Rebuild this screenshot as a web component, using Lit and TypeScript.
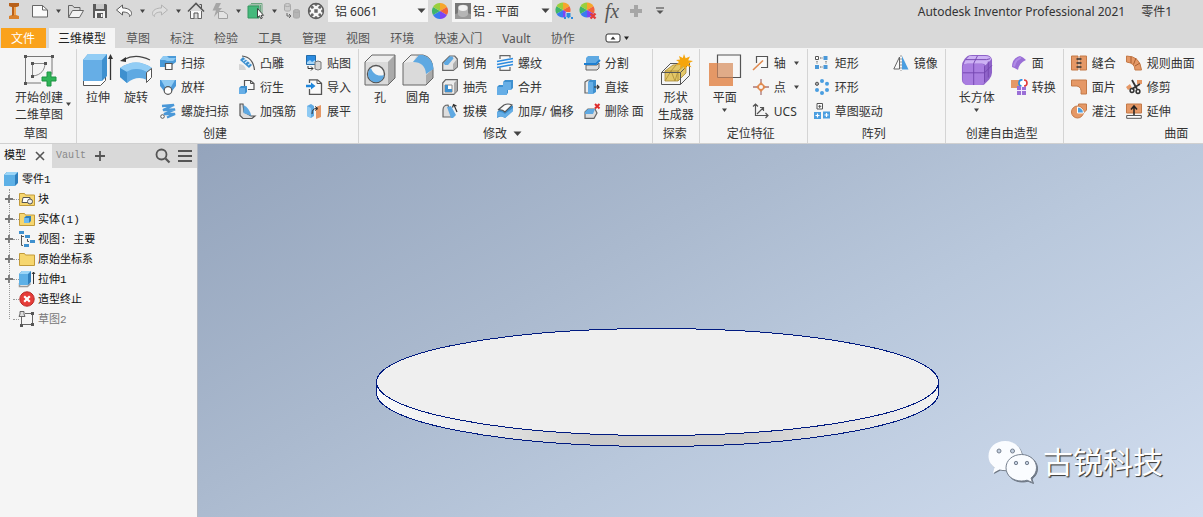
import { LitElement, html, svg, css, nothing } from "lit";
import type { TemplateResult } from "lit";
import { customElement, state } from "lit/decorators.js";
import { classMap } from "lit/directives/class-map.js";

const G = "#666";
const OR = "#e59866";

/* Colour wheel made of six equal sectors, clockwise from the top. */
function wheel(cx: number, cy: number, r: number) {
  const colors = ["#f7a62b", "#f2643a", "#7b45f5", "#3a7bf0", "#3fb56a", "#9bcf3c"];
  return colors.map((c, i) => {
    const a = ((i * 60 - 90) * Math.PI) / 180;
    const b = (((i + 1) * 60 - 90) * Math.PI) / 180;
    const p = (t: number) => `${(cx + r * Math.cos(t)).toFixed(2)} ${(cy + r * Math.sin(t)).toFixed(2)}`;
    return svg`<path d="M${cx} ${cy}L${p(a)}A${r} ${r} 0 0 1 ${p(b)}z" fill=${c}></path>`;
  });
}

/* Every glyph is drawn in a box of the size given first. */
const ICONS: Record<string, [number, number, TemplateResult]> = {
  logo: [18, 18, svg`<path d="M4 1h10v3l-3 1v8l3 1v3H4v-3l3-1V5L4 4z" fill="#d9802b"></path><path d="M4 1h10v3l-3 1H7L4 4zM7 5h2v8l-2 1z" fill="#b8601a"></path><path d="M9 5h2v8H9z" fill="#f0a04b"></path>`],
  fresh: [18, 18, svg`<path d="M1.500 3.500h10l5 4.500v7h-15z" fill="#fafafa" stroke=${G}></path><path d="M11.500 3.500V8h5" fill="none" stroke=${G}></path>`],
  open: [18, 18, svg`<path d="M1.500 15V3.500h4l1.500 2h6v3" fill="none" stroke=${G}></path><path d="M1.500 15.500l4-7h11l-4 7z" fill="#f2f2f2" stroke=${G}></path>`],
  save: [16, 16, svg`<path d="M1 1h13l1 1v13H1z" fill="#5a5a5a"></path><path d="M4 1h8v5H4z" fill="#c9c9c9"></path><path d="M3 8h10v7H3z" fill="#f2f2f2"></path><path d="M5 10h6v5H5z" fill="#5a5a5a"></path><path d="M9 11h1.500v3H9z" fill="#fff"></path>`],
  undo: [18, 16, svg`<path d="M1.500 7l6-5v3c5 0 9 2 9 5.500 0 1.500-1 2.500-2 3 .5-3-2.500-4.500-7-4.500v3z" fill="#fafafa" stroke="#5a5a5a"></path>`],
  redo: [18, 16, svg`<path d="M16.500 7l-6-5v3c-5 0-9 2-9 5.500 0 1.500 1 2.500 2 3-.5-3 2.500-4.500 7-4.500v3z" fill="#dedede" stroke="#b3b3b3"></path>`],
  home: [18, 18, svg`<path d="M3.500 9v7.500h11V9" fill="#fafafa" stroke=${G}></path><path d="M1 9.500L9 1.500l8 8" fill="none" stroke="#555" stroke-width="1.600"></path><path d="M12.500 2.500h2V6" fill="none" stroke="#555"></path><path d="M7 16.500V11h4v5.500" fill="#ddd" stroke="#555"></path>`],
  flash: [18, 18, svg`<path d="M5 1h5L7.500 6H11L3 15l2-6.500H1.500z" fill="#a6a6a6"></path><path d="M7.500 9.500h5l4 3v4h-9z" fill="#e3e3e3" stroke="#a0a0a0"></path>`],
  pick: [18, 18, svg`<path d="M4 1.500h11v11M2.500 3h11v11" fill="none" stroke="#69a57e"></path><path d="M1 4h11v12H1z" fill="#45b97c" stroke="#34965f"></path><path d="M10.500 6.500v9l2-1.800 1.300 3 1.500-.7-1.300-2.700h2.500z" fill="#fff" stroke="#333" stroke-width=".9"></path>`],
  link: [18, 18, svg`<g fill="#ccc" stroke="#aaa"><path d="M1.500 3v5c0 1.500 6 1.500 6 0V3"></path><ellipse cx="4.500" cy="3" rx="3" ry="1.500"></ellipse></g><g fill="#b5b5b5" stroke="#aaa"><path d="M10.500 9v6c0 1.500 6 1.500 6 0V9"></path><ellipse cx="13.500" cy="9" rx="3" ry="1.500"></ellipse></g><path d="M4 11v3h4M6 12l2 2-2 2" fill="none" stroke=${G}></path>`],
  ball: [18, 18, svg`<circle cx="9" cy="9" r="7.500" fill="#f7f7f7" stroke="#555" stroke-width="1.300"></circle><g fill="#666"><path d="M7.300 7.300h3.400v3.400H7.300zM7 1.500h4l-1 2.300H8zM7 16.500h4l-1-2.300H8zM1.500 7v4l2.300-1V8zM16.500 7v4l-2.300-1V8z"></path><circle cx="5.200" cy="5.200" r="1.500"></circle><circle cx="12.800" cy="5.200" r="1.500"></circle><circle cx="5.200" cy="12.800" r="1.500"></circle><circle cx="12.800" cy="12.800" r="1.500"></circle></g>`],
  wheel: [16, 16, svg`${wheel(8, 8, 8)}`],
  wheelAdd: [18, 18, svg`${wheel(8, 8, 7.5)}<path d="M11 10.500h5v4l-2.500 2.500-2.500-2.500z" fill="#2b8be0" stroke="#d9d9d9"></path><path d="M9 15h2v2H9zM16 15h2v2h-2z" fill="#2b8be0"></path>`],
  wheelDel: [18, 18, svg`${wheel(8, 8, 7.5)}<path d="M11.500 11.500l5 5m0-5l-5 5" stroke="#e23b3b" stroke-width="2.400"></path>`],
  plus: [14, 14, svg`<path d="M5 1h4v4h4v4H9v4H5V9H1V5h4z" fill="#a6a6a6"></path>`],
  more: [10, 10, svg`<path d="M1 2h8" stroke="#555" stroke-width="1.200"></path><path d="M1.500 4.500h7L5 8z" fill="#555"></path>`],
  arrow: [7, 5, svg`<path d="M1 .5h5L3.500 4z" fill="#444"></path>`],
  arrowBig: [9, 6, svg`<path d="M.5.500h8L4.500 5z" fill="#444"></path>`],
  swatch: [16, 16, svg`<path d="M0 0h16v16H0z" fill="#777"></path><path d="M0 11l8-2 8 2v5H0z" fill="#999"></path><path d="M3 4c0-3 10-3 10 0v5c1 3-2 5-5 5s-6-2-5-5z" fill="#b5b5b5"></path><ellipse cx="8" cy="5" rx="4.500" ry="3" fill="#f2f2f2"></ellipse>`],
  pill: [26, 12, svg`<rect x="1" y="2" width="14" height="8" rx="2" fill="#fff" stroke="#333"></rect><path d="M5.500 7.500L8 4.500l2.500 3z" fill="#333"></path><path d="M19 4.500h5L21.500 8z" fill="#222"></path>`],

  sketch: [32, 32, svg`<g fill="none" stroke="#777"><path d="M2 2.500h27v18M2.500 2v27H18"></path><path d="M8.500 9.500h13M9.500 9v13M22 9c0 7-4 12-12 13" stroke="#888"></path></g><path d="M1 1h3v3H1zM28 1h3v3h-3zM1 28h3v3H1zM8 8h3v3H8zM21 8h3v3h-3zM8 21h3v3H8z" fill="#555"></path><path d="M24 18h4v5h5v4h-5v5h-4v-5h-5v-4h5z" fill="#2fb457" stroke="#1d9443"></path>`],
  extrude: [32, 32, svg`<path d="M1.500 26v5.500h17l5-5V21" fill="#fff" stroke="#555"></path><path d="M1 6l5-6h19v22l-5 5H1z" fill="#3e90cf"></path><path d="M1 6h19v21H1z" fill="#66aee6"></path><path d="M1 6l5-6h19l-5 6z" fill="#92cdf5"></path><path d="M28.500 26V3" stroke="#333" stroke-width="1.300"></path><path d="M26 5l2.500-5L31 5z" fill="#333"></path>`],
  revolve: [32, 32, svg`<path d="M4 5.500Q16-1 30 6" fill="none" stroke="#444" stroke-width="1.300"></path><path d="M0 7l6-4v5z" fill="#333"></path><path d="M0 14Q16 3 32 14l-4 7Q16 13 7 29L0 23z" fill="#66aee6"></path><path d="M0 14Q16 3 32 14l-5 4Q16 12 6 18z" fill="#92cdf5"></path><path d="M0 14l7 4v11l-7-6z" fill="#3e90cf"></path><path d="M7 18q9-6 20 0v8q-10-5-20 3z" fill="#5fa9e2"></path><path d="M26.500 18.500l5-4v9l-5 5z" fill="#fff" stroke="#555"></path>`],
  hole: [32, 32, svg`<path d="M1 8l7-7h23v23l-7 7H1z" fill="#c9c9c9"></path><path d="M1 8h23v23H1z" fill="#dadada"></path><path d="M1 8l7-7h23l-7 7z" fill="#ededed"></path><path d="M24 8l7-7v23l-7 7z" fill="#aaa"></path><path d="M1 8l7-7h23v23l-7 7H1z" fill="none" stroke="#666"></path><circle cx="12" cy="20" r="8.500" fill="#f4f4f4" stroke="#555" stroke-width="1.400"></circle><path d="M7 14a8 8 0 1 0 13 7c-6 2-11-1-13-7z" fill="#5fa9e2"></path>`],
  fillet: [32, 32, svg`<path d="M1 31V9l8-8h12Q31 3 31 16v8l-7 7z" fill="#dadada"></path><path d="M24 21l7-6v9l-7 7z" fill="#aaa"></path><path d="M1 9l8-8h6l-4 7Q5 8 1 9z" fill="#eee"></path><path d="M1 31V9l8-8h12Q31 3 31 16v8l-7 7z" fill="none" stroke="#666"></path><path d="M17 1h4q10 3 10.500 14L24 20Q23 8 11 8z" fill="#5fa9e2"></path>`],
  shapegen: [32, 32, svg`<g fill="#e3c768" stroke="#a98a35" stroke-width=".8"><path d="M5 17l8-6 13-1v9l-8 8H5z"></path><path d="M5 17h13l8-7M18 17v10M5 27l6-10 4 10 3-10M11 17l5-6"></path></g><g fill="none" stroke="#555"><path d="M1.500 18.500h19v12h-19zM1.500 18.500l9-9M20.500 18.500l9-9v12l-9 9M10 9.500h8"></path></g><path d="M24 0l1.600 4.200L30 2.500l-1.800 3.700 4.800.8-4.500 2.400 3 3.800-4.600-1.200L25 16l-1.500-4.200L20 14.500l.4-4L16 11l3-3-3-2 4-.4-1-3.600 3.800 2z" fill="#f5a50c"></path>`],
  plane: [32, 32, svg`<path d="M8.500 1h23v22.500h-23z" fill="#f7f7f7" stroke="#555" stroke-width="1.200"></path><path d="M0 9h24v23H0z" fill="#e59866"></path><path d="M9 9h15v14H9z" fill="#e0ab88"></path><path d="M8.500 9v14.500H24" stroke="#a8765a" fill="none"></path>`],
  box: [32, 32, svg`<g transform="scale(.94)"><path d="M1 13q0-4 3-8l3-3q2-1 5-1h14q6 0 7 5v14q0 3-3 7l-4 4q-1 2-4 2H7q-6-1-6-6z" fill="#8f63c9"></path><path d="M2 13q0-3 5-3h14q4 0 4 4v14q0 5-4 5H7q-5 0-5-5z" fill="#a97de0"></path><path d="M3 11q1-5 6-9h17q6 0 6 4l-6 6q-1-2-4-2H7z" fill="#cdb2f4"></path><path d="M2 20h23l8-8M13.500 10v23M13.500 10l4-8M25 13v17M5 6h22l4-1M29 8v17" fill="none" stroke="#7446b0"></path></g>`],

  sweep: [16, 16, svg`<path d="M0 5l4-4h12v6l-4 3H5v2H0z" fill="#4a9ad8"></path><path d="M0 5l3-4h4l2 2h7l-3 3H7L5 5z" fill="#8ecaf3"></path><path d="M5.500 8.500h6.500v6H5.500z" fill="#fff" stroke="#555" stroke-width="1.200"></path>`],
  loft: [16, 16, svg`<path d="M0 1h16v6l-4 5H4L0 7z" fill="#4a98d8"></path><path d="M1 1h14l-4 7H5z" fill="#8ecaf3"></path><circle cx="8" cy="11.500" r="3.800" fill="#fff" stroke="#555" stroke-width="1.200"></circle>`],
  coil: [16, 16, svg`<path d="M2 3L14 2 3 7l12-.5L4 11l11 0-8 3.500" fill="none" stroke="#4a98d8" stroke-width="2.400"></path><circle cx="2.500" cy="13.500" r="1.800" fill="#fff" stroke="#555"></circle>`],
  emboss: [16, 16, svg`<path d="M0 15V9q6 0 7 6z" fill="#d5d5d5"></path><path d="M3 1q11 1 12.500 14" fill="none" stroke="#555" stroke-width="1.200"></path><path d="M1 5l3-3 9 8-3 3z" fill="#3e90cf"></path><path d="M4 6l3-2M6 8l3-2.500M9 10l3-2" stroke="#cfe8fb" stroke-width="1.200"></path>`],
  derive: [16, 16, svg`<path d="M5.500 7V1.500h6l3.500 3v6H9" fill="#fafafa" stroke="#555" stroke-width="1.200"></path><path d="M11.500 1.500v3H15" fill="none" stroke="#555"></path><path d="M0 9l2-2h6v6l-2 2H0z" fill="#3e90cf"></path><path d="M0 9h6v6H0z" fill="#66aee6"></path>`],
  rib: [16, 16, svg`<path d="M1 1h3l1 8 7 4h4l-3 2.500H4l-3-3z" fill="#ddd" stroke="#555" stroke-width="1.200"></path><path d="M4.500 2v8l8 3q-2-8-8-11z" fill="#5fa9e2"></path>`],
  decal: [16, 16, svg`<path d="M.5.500h9v9h-9z" fill="#2b8be0" stroke="#236ba8"></path><path d="M1 7l3-2 2 2 3-2v4H1z" fill="#a8d5f5"></path><path d="M9 7q3-2 6 0v7q-3 2-6 0z" fill="#d5d5d5" stroke="#777"></path><path d="M2 11v2.500h5M5 11.500l2 2-2 2" fill="none" stroke="#333"></path>`],
  importIt: [16, 16, svg`<path d="M3.500 4V.8h8l4 3.500v11h-12V10" fill="#fafafa" stroke="#555" stroke-width="1.300"></path><path d="M11 1v3.500h4" fill="none" stroke="#555"></path><path d="M0 5.800h5V3.500L9.500 7 5 10.500V8.200H0z" fill="#1e86dc"></path>`],
  flat: [16, 16, svg`<path d="M1 3l4-2 3 2v10l-3 2-4-2z" fill="#5fa9e2"></path><path d="M1 3l4 2v10l-4-2z" fill="#8ecaf3"></path><path d="M10 4l5-2v12l-5 2z" fill="#e59866"></path><path d="M6 11q0-6 5-5.500M9 3.500l3 2-3 2" fill="none" stroke="#333"></path>`],
  chamfer: [16, 16, svg`<path d="M.7 8l7-7h5L15.300 4v8l-4 3.300H.7z" fill="#e3e3e3" stroke="#666" stroke-width="1.200"></path><path d="M11 9l4-5v8l-4 3.300z" fill="#b0b0b0"></path><path d="M1.500 8l6-6.500h3l1 2L6 10H3z" fill="#5fa9e2"></path>`],
  shell: [16, 16, svg`<path d="M.7 4l3-3.300h11.600v11l-3.500 3.600H.7z" fill="#ececec" stroke="#666" stroke-width="1.200"></path><path d="M12 4l3-3v11l-3 3z" fill="#aaa"></path><path d="M3 6h7v7H3z" fill="#fff" stroke="#888"></path><path d="M3 6h3v4h4v3H3z" fill="#3e90cf"></path>`],
  draft: [16, 16, svg`<path d="M1 14V7q0-5 5-5l4 12z" fill="#ddd" stroke="#666" stroke-width="1.200"></path><path d="M5 4l4-1 5 9-3 3H9z" fill="#5fa9e2"></path><path d="M15 9l-3-7M10.500 4.500l1-3 3 1.500" fill="none" stroke="#333" stroke-width="1.200"></path>`],
  thread: [16, 16, svg`<path d="M3 4V.7h10v2M3 12.500v2.800h10V12" fill="#fafafa" stroke="#666" stroke-width="1.200"></path><path d="M0 6.500l16-3M0 9.500l16-3M0 12.500l16-3" stroke="#2b8be0" stroke-width="1.400"></path>`],
  combine: [16, 16, svg`<path d="M6 3l2-2h8v8l-2 2h-3v3l-2 2H0V8l2-2h4z" fill="#3e90cf"></path><path d="M6 3h8v8h-4v5H0V8h6z" fill="#66aee6"></path>`],
  thicken: [16, 16, svg`<path d="M0 9l8-7q4-2 8 1v5l-8 7q-4-3-8 0z" fill="#3e90cf"></path><path d="M1 7l6-5q4-2 8 0L8 9Q5 6 1 7z" fill="#fafafa" stroke="#555" stroke-width="1.200"></path><path d="M0 9q4-1 8 2l8-6v3l-8 7q-4-3-8-1z" fill="#66aee6"></path>`],
  split: [16, 16, svg`<path d="M2 3l2-2h11v4l-2 3H2z" fill="#5fa9e2"></path><path d="M2 10h11l2-2v5l-2 2H2z" fill="#ddd" stroke="#666"></path><path d="M0 9h12l4-4" fill="none" stroke="#1e7fd0" stroke-width="1.800"></path>`],
  direct: [16, 16, svg`<path d="M1 3l3-2h3v13H1z" fill="#ececec" stroke="#666" stroke-width="1.200"></path><path d="M4 3l2-2h6v12l-3 2H4z" fill="#3e90cf"></path><path d="M4 3h5v12H4z" fill="#66aee6"></path><path d="M10 8h5M13 6l2 2-2 2" fill="none" stroke="#333" stroke-width="1.200"></path>`],
  delFace: [16, 16, svg`<path d="M1 9l3-3h7l2 4-3 5.300H1z" fill="#ddd" stroke="#666" stroke-width="1.200"></path><path d="M1 9l3-3h7l-2 5H1z" fill="#5fa9e2"></path><path d="M11 1l4.500 4.500m0-4.500L11 5.500" stroke="#e02b2b" stroke-width="2"></path>`],
  axis: [16, 16, svg`<path d="M3.500 8V1.500h11v11H8" fill="#fafafa" stroke="#555" stroke-width="1.200"></path><path d="M0 15L10 5.500" stroke="#e08a50" stroke-width="1.600"></path>`],
  point: [16, 16, svg`<path d="M8 0v16M0 8h16" stroke="#a77" stroke-width="1.300"></path><path d="M8 3l5 5-5 5-5-5z" fill="#e08a50"></path><circle cx="8" cy="8" r="2" fill="#f7f7f7"></circle>`],
  ucs: [16, 16, svg`<path d="M2.500 1v11.500H15M0 3.500L2.500 1 5 3.500M12.500 10l2.500 2.500-2.500 2.500M4 11l6-6M7 4.500h3.500V8" fill="none" stroke="#555" stroke-width="1.200"></path>`],
  rect: [16, 16, svg`<path d="M9.500 1h4v4h-4zM1 10h4v4H1zM9.500 10h4v4h-4z" fill="#4a98d8"></path><path d="M1.500 1.500h3v3h-3z" fill="#fff" stroke="#555"></path><path d="M6 3h3M3 6v3M12 6v3M6 12h3" stroke="#555" stroke-dasharray="1.500 1"></path>`],
  circ: [16, 16, svg`<g fill="#4a9ee0"><circle cx="8" cy="2" r="2"></circle><circle cx="13" cy="4.800" r="2"></circle><circle cx="13" cy="11" r="2"></circle><circle cx="8" cy="14" r="2"></circle><circle cx="3" cy="11" r="2"></circle></g><circle cx="3" cy="4.800" r="1.600" fill="#aaa" stroke="#555"></circle>`],
  skdrive: [16, 16, svg`<path d="M3 .5h5.500V6H3z" fill="#fff" stroke="#555"></path><path d="M5.700 2v3M4.300 3.300h3" stroke="#555"></path><path d="M0 9h7v7H0zM9 8.500h7v7H9z" fill="#4a9ee0"></path><path d="M3.500 10.500v4M1.500 12.500h4M12.500 10v4M10.500 12h4" stroke="#fff" stroke-width="1.200"></path>`],
  mirror: [16, 16, svg`<path d="M6.500 2v12H.8z" fill="#fafafa" stroke="#666"></path><path d="M9 1l6.500 13.500H9z" fill="#4a9ee0"></path><path d="M8 0v16" stroke="#999" stroke-dasharray="2 1"></path>`],
  face: [16, 16, svg`<path d="M1 12Q1 3 9 1q3 1 6 4-7 3-8 10-3-2-6-3z" fill="#9a6fd6"></path><path d="M3 11.500Q4 5 10 2.500" stroke="#b08be6" fill="none" stroke-width="2"></path>`],
  convert: [16, 16, svg`<path d="M0 1h9v8H0z" fill=${OR}></path><path d="M6 7h9v9H6z" fill="#9a6fd6"></path><path d="M6 11.500h9M10.500 7v9" stroke="#f2e9ff"></path><circle cx="12" cy="4" r="4" fill="#fff"></circle><path d="M10.500 7a3 3 0 0 1 1-6" fill="none" stroke="#2b8be0" stroke-width="1.600"></path><path d="M13 1a3 3 0 0 1 0 6" fill="none" stroke="#e23b3b" stroke-width="1.600"></path>`],
  stitch: [16, 16, svg`<path d="M.5 1h6.500v14H.5zM9 1h6.500v14H9z" fill=${OR} stroke="#c47a48"></path><path d="M5.500 4h5M5.500 8h5M5.500 12h5" stroke="#333" stroke-width="1.300"></path>`],
  patch: [16, 16, svg`<path d="M.5 1h15v14H10q1-7-4-8H.5z" fill=${OR} stroke="#c47a48"></path>`],
  sculpt: [16, 16, svg`<path d="M7.500 1h8v6l-4 4-4-4z" fill=${OR} stroke="#c47a48"></path><circle cx="6.500" cy="9" r="6" fill=${OR} stroke="#c47a48"></circle><path d="M6.500 4a6 6 0 0 1 6 6h-6z" fill="#4a9ee0" stroke="#fff"></path>`],
  ruled: [16, 16, svg`<path d="M.5 1Q14 1 15.500 15H9Q9 8 .5 7z" fill=${OR} stroke="#c47a48"></path><path d="M5 1.500L5 8M10 3L7.500 9.500M14 8l-5 3" stroke="#a85f30"></path>`],
  trim: [16, 16, svg`<path d="M0 8l4-3 2 4-4 2zM11 1h5v4h-5z" fill=${OR}></path><path d="M6 1l5 9M14 5L6 10" stroke="#333" stroke-width="1.800"></path><circle cx="6" cy="11.500" r="1.900" fill="none" stroke="#333" stroke-width="1.500"></circle><circle cx="12" cy="12.500" r="1.900" fill="none" stroke="#333" stroke-width="1.500"></circle>`],
  extend: [16, 16, svg`<path d="M.5 1h15v9H.5z" fill=${OR} stroke="#c47a48"></path><path d="M.7 12.500h14.600v2.800H.7z" fill="#fff" stroke="#555"></path><path d="M8 12V4M5 6.500L8 3l3 3.500" fill="none" stroke="#222" stroke-width="1.500"></path>`],

  close: [10, 10, svg`<path d="M1 1l8 8M9 1L1 9" stroke="#555" stroke-width="1.600"></path>`],
  add: [10, 10, svg`<path d="M5 0v10M0 5h10" stroke="#555" stroke-width="1.800"></path>`],
  search: [16, 16, svg`<circle cx="6.500" cy="6.500" r="5" fill="none" stroke="#555" stroke-width="1.800"></circle><path d="M10.500 10.500l4 4" stroke="#555" stroke-width="2.200"></path>`],
  menu: [14, 14, svg`<path d="M0 2h14M0 7h14M0 12h14" stroke="#555" stroke-width="2"></path>`],
  expand: [8, 8, svg`<path d="M4 0v8M0 4h8" stroke="#777" stroke-width="1.800"></path>`],
  cube: [16, 16, svg`<path d="M1 4l3-3h11v11l-3 3H1z" fill="#2f7fbd"></path><path d="M1 4h11v11H1z" fill="#5db0e6"></path><path d="M1 4l3-3h11l-3 3z" fill="#9ad5f7"></path>`],
  folder: [16, 16, svg`<path d="M.5 14.500V2.500h5l1 1.500h9v10.500z" fill="#f6d66f" stroke="#c19a3a"></path>`],
  blocks: [16, 16, svg`<path d="M.5 14.500V2.500h5l1 1.500h9v10.500z" fill="#f6d66f" stroke="#c19a3a"></path><path d="M3 11.500l1-5h7v5z" fill="#fff" stroke="#555"></path><circle cx="11" cy="10.500" r="2.500" fill="#eee" stroke="#555"></circle>`],
  solids: [16, 16, svg`<path d="M.5 14.500V2.500h5l1 1.500h9v10.500z" fill="#f6d66f" stroke="#c19a3a"></path><path d="M5 7l2-2h5v5l-2 2H5z" fill="#2f7fbd"></path><path d="M5 7h5v5H5z" fill="#6cbaf0"></path>`],
  views: [16, 16, svg`<path d="M0 0h5v3H0zM6 4h5v3H6zM11 9h5v3h-5zM5 13h5v3H5z" fill="#3e90cf"></path><path d="M2.500 4v10.500H4M8.500 8v2.500H10M2.500 5.500H5" fill="none" stroke="#555"></path>`],
  extrusion: [16, 16, svg`<path d="M.5 12v3.500h8l3-3" fill="none" stroke="#999" stroke-width="1.500"></path><path d="M0 3l3-3h9v11l-3 3H0z" fill="#2f7fbd"></path><path d="M0 3h9v11H0z" fill="#5db0e6"></path><path d="M0 3l3-3h9L9 3z" fill="#9ad5f7"></path><path d="M14.500 13V1M13 3l1.500-2L16 3" fill="none" stroke="#333"></path>`],
  eop: [16, 16, svg`<circle cx="8" cy="8" r="7.200" fill="#e63c38" stroke="#b92a28"></circle><path d="M5.200 5.200l5.600 5.600m0-5.600l-5.600 5.600" stroke="#fff" stroke-width="2.200"></path>`],
  sketchSm: [16, 16, svg`<path d="M6 2.500h7.500v11h-11" fill="none" stroke="#666"></path><path d="M2.500 6v9" stroke="#666"></path><path d="M1 .5h4V3l1 2.500H0L1 3z" fill="#ddd" stroke="#666"></path><path d="M12 1h3v3h-3zM12 12h3v3h-3zM1 13h3v3H1z" fill="#555"></path>`],
};

function icon(name: string) {
  const [w, h, body] = ICONS[name];
  return html`<svg class="icon" width=${w} height=${h} viewBox="0 0 ${w} ${h}" aria-hidden="true">${body}</svg>`;
}

type Small = [icon: string, label: string, menu?: boolean];
interface Large { icon: string; lines: string[]; menu?: "below" | "side" }
interface Panel { id: string; title: string; large: Large[]; columns: Small[][]; menu?: boolean }

const PANELS: Panel[] = [
  { id: "sketch", title: "草图", large: [{ icon: "sketch", lines: ["开始创建", "二维草图"], menu: "side" }], columns: [] },
  {
    id: "create", title: "创建",
    large: [{ icon: "extrude", lines: ["拉伸"] }, { icon: "revolve", lines: ["旋转"] }],
    columns: [
      [["sweep", "扫掠"], ["loft", "放样"], ["coil", "螺旋扫掠"]],
      [["emboss", "凸雕"], ["derive", "衍生"], ["rib", "加强筋"]],
      [["decal", "贴图"], ["importIt", "导入"], ["flat", "展平"]],
    ],
  },
  {
    id: "modify", title: "修改", menu: true,
    large: [{ icon: "hole", lines: ["孔"] }, { icon: "fillet", lines: ["圆角"] }],
    columns: [
      [["chamfer", "倒角"], ["shell", "抽壳"], ["draft", "拔模"]],
      [["thread", "螺纹"], ["combine", "合并"], ["thicken", "加厚/ 偏移"]],
      [["split", "分割"], ["direct", "直接"], ["delFace", "删除 面"]],
    ],
  },
  { id: "explore", title: "探索", large: [{ icon: "shapegen", lines: ["形状", "生成器"] }], columns: [] },
  {
    id: "work", title: "定位特征",
    large: [{ icon: "plane", lines: ["平面"], menu: "below" }],
    columns: [[["axis", "轴", true], ["point", "点", true], ["ucs", "UCS"]]],
  },
  {
    id: "pattern", title: "阵列", large: [],
    columns: [[["rect", "矩形"], ["circ", "环形"], ["skdrive", "草图驱动"]], [["mirror", "镜像"]]],
  },
  {
    id: "freeform", title: "创建自由造型",
    large: [{ icon: "box", lines: ["长方体"], menu: "below" }],
    columns: [[["face", "面"], ["convert", "转换"]]],
  },
  {
    id: "surface", title: "曲面", large: [],
    columns: [
      [["stitch", "缝合"], ["patch", "面片"], ["sculpt", "灌注"]],
      [["ruled", "规则曲面"], ["trim", "修剪"], ["extend", "延伸"]],
    ],
  },
];

const base = css`
  :host { box-sizing: border-box; }
  *, *::before, *::after { box-sizing: border-box; }
  button, select {
    font: inherit; color: inherit; background: none; border: 0; border-radius: 0; margin: 0; padding: 0;
  }
  .icon { display: block; flex: none; overflow: visible; }
`;

@customElement("quick-bar")
class QuickBar extends LitElement {
  static styles = [base, css`
    :host { display: flex; align-items: flex-start; height: 28px; padding: 0 31px 0 2px; background: #d9d9d9; color: #333; }
    .btn { width: 24px; height: 22px; display: grid; place-items: center; flex: none; }
    .logo { margin-right: 2px; }
    .narrow { width: 12px; }
    .combo { position: relative; display: flex; align-items: center; width: 100px; height: 22px; background: #f5f5f5; flex: none; padding: 0 3px; gap: 2px; }
    .combo.plain { padding-left: 7px; }
    .combo select { appearance: none; flex: 1; min-width: 0; height: 22px; padding-top: 2px; outline: 0; }
    .combo .caret { position: absolute; right: 2px; top: 8px; pointer-events: none; }
    .fx { font: italic 20px/20px "Liberation Serif", serif; color: #555; }
    .title { margin: 0 16px 0 auto; font: inherit; line-height: 24px; white-space: nowrap; }
    .doc { line-height: 24px; white-space: nowrap; }
  `];

  private btn(name: string, label: string, extra = "") {
    return html`<button class="btn ${extra}" aria-label=${label}>${icon(name)}</button>`;
  }

  render() {
    return html`
      ${this.btn("logo", "应用程序菜单", "logo")}
      ${this.btn("fresh", "新建")}${this.btn("arrow", "新建选项", "narrow")}
      ${this.btn("open", "打开")}${this.btn("save", "保存")}
      ${this.btn("undo", "放弃")}${this.btn("arrow", "放弃列表", "narrow")}
      ${this.btn("redo", "重做")}${this.btn("arrow", "重做列表", "narrow")}
      ${this.btn("home", "主视图")}
      ${this.btn("flash", "更新")}${this.btn("arrow", "更新选项", "narrow")}
      ${this.btn("pick", "选择")}${this.btn("arrow", "选择选项", "narrow")}
      ${this.btn("link", "返回")}${this.btn("ball", "材料浏览器")}
      <div class="combo plain">
        <select aria-label="材料"><option>铝 6061</option></select>
        <span class="caret">${icon("arrowBig")}</span>
      </div>
      ${this.btn("wheel", "外观浏览器")}
      <div class="combo">
        ${icon("swatch")}
        <select aria-label="外观"><option>铝 - 平面</option></select>
        <span class="caret">${icon("arrowBig")}</span>
      </div>
      ${this.btn("wheelAdd", "调整外观")}${this.btn("wheelDel", "清除外观")}
      <button class="btn fx" aria-label="参数">fx</button>
      ${this.btn("plus", "添加")}${this.btn("more", "自定义")}
      <h1 class="title">Autodesk Inventor Professional 2021</h1>
      <span class="doc">零件1</span>
    `;
  }
}

@customElement("ribbon-tabs")
class RibbonTabs extends LitElement {
  @state() private active = "三维模型";
  private tabs = ["三维模型", "草图", "标注", "检验", "工具", "管理", "视图", "环境", "快速入门", "Vault", "协作"];

  static styles = [base, css`
    :host { display: flex; height: 20px; padding-left: 1px; background: #d9d9d9; color: #555; }
    .file { background: #faa21b; color: #fff; padding: 2px 11px 0 10px; margin-right: 2px; line-height: 18px; }
    .tab { padding: 2px 9px 0; margin: 0 1px; line-height: 18px; white-space: nowrap; }
    .tab.on { background: #f5f5f5; color: #222; }
    .view { margin-left: 20px; display: grid; place-items: center; }
  `];

  render() {
    return html`
      <button class="file">文件</button>
      ${this.tabs.map((t) => html`<button class=${classMap({ tab: true, on: t === this.active })} @click=${() => (this.active = t)}>${t}</button>`)}
      <button class="view" aria-label="最小化功能区">${icon("pill")}</button>
    `;
  }
}

@customElement("ribbon-panels")
class RibbonPanels extends LitElement {
  static styles = [base, css`
    :host { display: flex; height: 96px; padding-top: 1px; background: #f5f5f5; border-bottom: 1px solid #d0d0d0; color: #333; overflow: hidden; }
    .panel { display: flex; flex-direction: column; flex: none; border-right: 1px solid #d4d4d4; padding: 2px 7px 0 2px; }
    .body { display: flex; flex: 1; gap: 5px; }
    .larges { display: flex; }
    .cols { display: flex; gap: 10px; }
    .col { display: flex; flex-direction: column; }
    .title { display: flex; align-items: center; justify-content: center; gap: 6px; height: 20px; padding-top: 2px; margin: 0; font: inherit; }
    .small { display: flex; align-items: center; gap: 5px; height: 24px; white-space: nowrap; }
    .small .text { padding-top: 2px; }
    .small .menu { margin-left: 2px; }
    .large { display: flex; flex-direction: column; align-items: center; width: 38px; padding-top: 3px; line-height: 17px; white-space: nowrap; }
    .large .icon { margin-bottom: 3px; }
    .large .below { height: 8px; display: grid; place-items: center; }
    .large .below .icon { margin: 0; }
    .lines { display: block; }
    .line { display: block; }
    .side { display: flex; align-items: center; gap: 2px; }

    .sketch { width: 77px; }
    .sketch .larges { padding-left: 13px; }
    .sketch .large { width: auto; align-items: flex-start; }
    .sketch .large > .icon { margin-left: 8px; }
    .modify { padding-right: 8px; }
    .explore { padding-right: 4px; }
    .explore .larges { padding-left: 2px; }
    .work .body { gap: 9px; padding-left: 4px; }
    .pattern .body { padding-left: 4px; }
    .freeform .larges { padding-left: 10px; }
    .freeform .body { gap: 15px; }
    .surface { width: 230px; border: 0; }
    .surface .body { padding-left: 5px; }
  `];

  private large(l: Large) {
    const lines = html`<span class="lines">${l.lines.map((t) => html`<span class="line">${t}</span>`)}</span>`;
    return html`<button class="large">
      ${icon(l.icon)}
      ${l.menu === "side" ? html`<span class="side">${lines}${icon("arrow")}</span>` : lines}
      ${l.menu === "below" ? html`<span class="below">${icon("arrow")}</span>` : nothing}
    </button>`;
  }

  render() {
    return PANELS.map((p) => html`
      <section class="panel ${p.id}">
        <div class="body">
          ${p.large.length ? html`<div class="larges">${p.large.map((l) => this.large(l))}</div>` : nothing}
          ${p.columns.length ? html`<div class="cols">${p.columns.map((c) => html`
            <div class="col">${c.map(([i, t, m]) => html`
              <button class="small">${icon(i)}<span class="text">${t}</span>${m ? html`<span class="menu">${icon("arrow")}</span>` : nothing}</button>`)}
            </div>`)}</div>` : nothing}
        </div>
        <h2 class="title">${p.title}${p.menu ? icon("arrowBig") : nothing}</h2>
      </section>`);
  }
}

@customElement("model-browser")
class ModelBrowser extends LitElement {
  private nodes: { icon: string; label: string; open?: boolean; dim?: boolean }[] = [
    { icon: "blocks", label: "块", open: true },
    { icon: "solids", label: "实体(1)", open: true },
    { icon: "views", label: "视图: 主要", open: true },
    { icon: "folder", label: "原始坐标系", open: true },
    { icon: "extrusion", label: "拉伸1", open: true },
    { icon: "eop", label: "造型终止" },
    { icon: "sketchSm", label: "草图2", dim: true },
  ];

  static styles = [base, css`
    :host { display: block; background: #f5f5f5; color: #111; font: 11px/18px "Liberation Mono", "Noto Sans CJK SC", monospace; }
    .tabs { display: flex; align-items: center; height: 24px; background: #d9d9d9; padding-right: 5px; }
    .tab { display: flex; align-items: center; gap: 9px; height: 24px; padding: 0 7px 0 4px; background: #f5f5f5; }
    .other { font-size: 10px; color: #888; padding: 0 9px 0 4px; }
    .tools { display: flex; align-items: center; gap: 7px; margin-left: auto; }
    .tree, .kids { list-style: none; margin: 0; padding: 0; }
    .tree { padding-top: 1px; }
    .root { display: flex; align-items: center; gap: 3px; height: 20px; padding-left: 3px; }
    .text { padding-top: 2px; white-space: nowrap; }
    .kids { position: relative; padding-left: 5px; }
    .kids::before { content: ""; position: absolute; left: 9px; top: 0; bottom: 10px; border-left: 1px dotted #999; }
    .node { display: flex; align-items: center; height: 20px; position: relative; }
    .node .knob { width: 8px; height: 8px; background: #f5f5f5; }
    .node .knob.leaf { background: none; }
    .node .dash { width: 6px; border-top: 1px dotted #999; }
    .node .text { padding-left: 3px; }
    .dim { color: #777; }
  `];

  render() {
    return html`
      <div class="tabs">
        <div class="tab"><span>模型</span><button aria-label="关闭">${icon("close")}</button></div>
        <button class="other">Vault</button>
        <button aria-label="添加选项卡">${icon("add")}</button>
        <div class="tools">
          <button aria-label="搜索">${icon("search")}</button>
          <button aria-label="菜单">${icon("menu")}</button>
        </div>
      </div>
      <ul class="tree">
        <li>
          <div class="root">${icon("cube")}<span class="text">零件1</span></div>
          <ul class="kids">
            ${this.nodes.map((n) => html`<li class="node">
              ${n.open ? html`<button class="knob" aria-label="展开">${icon("expand")}</button>` : html`<span class="knob leaf"></span>`}
              <span class="dash"></span>${icon(n.icon)}
              <span class=${classMap({ text: true, dim: !!n.dim })}>${n.label}</span>
            </li>`)}
          </ul>
        </li>
      </ul>
    `;
  }
}

@customElement("model-view")
class ModelView extends LitElement {
  static styles = [base, css`
    :host { display: block; position: relative; overflow: hidden; background: linear-gradient(150deg, #94a4bc 0%, #aab9ce 36%, #b9c8dc 60%, #d1ddef 100%); }
    .scene { position: absolute; inset: 0; width: 100%; height: 100%; }
    .mark { position: absolute; right: 40px; bottom: 33px; display: flex; align-items: center; gap: 5px; color: #fff; font-size: 30px; line-height: 44px; text-shadow: 1px 1px 1px #444, 1px 1px 0 #555; }
    .bubbles { filter: drop-shadow(1px 1px 0 #6d7683); }
  `];

  render() {
    return html`
      <svg class="scene" viewBox="198 144 1005 373" role="img" aria-label="圆盘零件">
        <defs>
          <linearGradient id="rim" x1="376" x2="939" y1="0" y2="0" gradientUnits="userSpaceOnUse">
            <stop offset="0" stop-color="#fafafa"></stop>
            <stop offset=".15" stop-color="#ebecec"></stop>
            <stop offset=".26" stop-color="#dcdddc"></stop>
            <stop offset=".38" stop-color="#c9c9c9"></stop>
            <stop offset=".65" stop-color="#cbcbcb"></stop>
            <stop offset=".78" stop-color="#dedede"></stop>
            <stop offset="1" stop-color="#f1f1f1"></stop>
          </linearGradient>
        </defs>
        <g stroke="#001a80" shape-rendering="crispEdges">
          <path d="M376.500 382v11a281 53.500 0 0 0 562 0v-11z" fill="url(#rim)"></path>
          <ellipse cx="657.500" cy="382" rx="281" ry="53.500" fill="#efefef"></ellipse>
        </g>
      </svg>
      <div class="mark">
        <svg class="icon bubbles" width="50" height="44" viewBox="0 0 50 44" aria-hidden="true">
          <path d="M17 1C7.500 1 .5 7.500.5 16c0 5 2.500 9 6 11.500L5 33l6.500-3.500c2 .6 4 .8 6 .8C27 30.300 34 24 34 16S27 1 17 1z" fill="#fafcff"></path>
          <path d="M33.500 14.500c-9 0-15.500 5.800-15.500 13.300S24.500 41 33.500 41c2 0 4-.3 5.500-.8l5.500 2.300-1.500-4.500c3.300-2.400 5.500-6 5.500-10.200 0-7.500-6.500-13.300-15-13.300z" fill="#fafcff" stroke="#76808f"></path>
          <g fill="#c3cfe0" stroke="#76808f"><circle cx="11" cy="11" r="2"></circle><circle cx="24.500" cy="11" r="2"></circle><circle cx="28" cy="23" r="1.700"></circle><circle cx="39" cy="23" r="1.700"></circle></g>
        </svg>
        <span>古锐科技</span>
      </div>
    `;
  }
}

@customElement("app-root")
class AppRoot extends LitElement {
  static styles = [base, css`
    :host { display: flex; flex-direction: column; height: 100vh; overflow: hidden; font: 12px/16px "Noto Sans", "Noto Sans CJK SC", sans-serif; }
    .main { flex: 1; display: grid; grid-template-columns: 198px minmax(0, 1fr); min-height: 0; }
    .side { border-right: 1px solid #b4bac4; }
  `];

  render() {
    return html`
      <quick-bar></quick-bar>
      <ribbon-tabs></ribbon-tabs>
      <ribbon-panels></ribbon-panels>
      <div class="main">
        <model-browser class="side"></model-browser>
        <model-view></model-view>
      </div>
    `;
  }
}
